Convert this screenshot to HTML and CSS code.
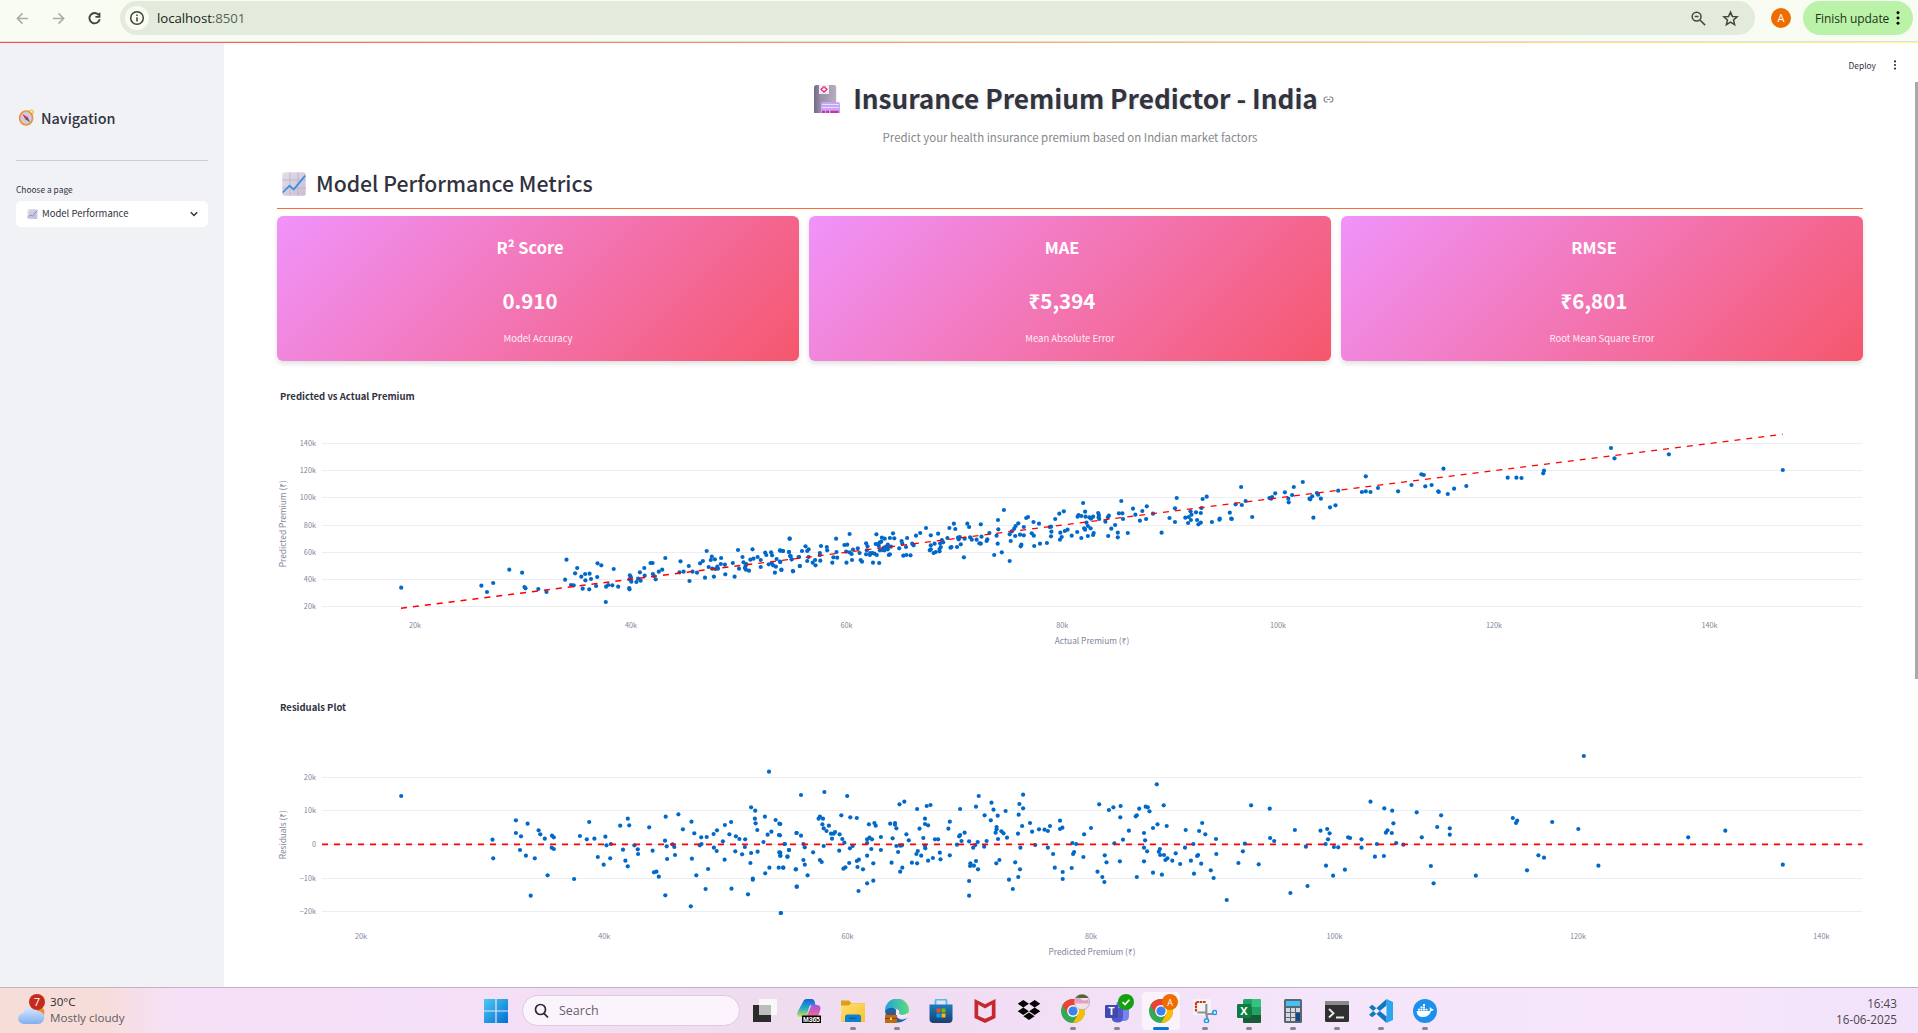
FILE: index.html
```html
<!DOCTYPE html>
<html lang="en">
<head>
<meta charset="utf-8">
<title>Insurance Premium Predictor - India</title>
<link rel="stylesheet" href="styles.css">
</head>
<body>
<svg class="defs" width="0" height="0" aria-hidden="true">
  <defs>
    <linearGradient id="paper" x1="0" y1="0" x2="1" y2="1"><stop offset="0" stop-color="#e6deeb"/><stop offset="1" stop-color="#c9bdd3"/></linearGradient>
    <linearGradient id="steel" x1="0" y1="0" x2="1" y2="0"><stop offset="0" stop-color="#74688a"/><stop offset=".3" stop-color="#998fa6"/><stop offset="1" stop-color="#b8aebf"/></linearGradient>
    <linearGradient id="win" x1="0" y1="0" x2="1" y2="1"><stop offset="0" stop-color="#4cc8f6"/><stop offset="1" stop-color="#0070cf"/></linearGradient>
    <linearGradient id="folder" x1="0" y1="0" x2="1" y2="1"><stop offset="0" stop-color="#ffdf72"/><stop offset="1" stop-color="#fcc02a"/></linearGradient>
    <linearGradient id="edge" x1="0" y1="0" x2="1" y2="0"><stop offset="0" stop-color="#27a0dc"/><stop offset="1" stop-color="#5bdc7c"/></linearGradient>
    <linearGradient id="store" x1="0" y1="0" x2="0" y2="1"><stop offset="0" stop-color="#1c7cc0"/><stop offset="1" stop-color="#1b3f6e"/></linearGradient>
    <linearGradient id="cloud" x1="0" y1="0" x2="0" y2="1"><stop offset="0" stop-color="#dbe8ff"/><stop offset="1" stop-color="#7fb0f0"/></linearGradient>
    <linearGradient id="cpA" x1="0" y1="0" x2="0" y2="1"><stop offset="0" stop-color="#1b62d8"/><stop offset=".5" stop-color="#1fa9c8"/><stop offset="1" stop-color="#d8e04a"/></linearGradient>
    <linearGradient id="cpB" x1="0" y1="0" x2="0" y2="1"><stop offset="0" stop-color="#a950e8"/><stop offset="1" stop-color="#f3708c"/></linearGradient>
    <symbol id="chart-up" viewBox="0 0 24 24">
      <rect x=".3" y=".3" width="23.4" height="23.4" rx="2" fill="url(#paper)"/>
      <path d="M8 0v24M16 0v24M0 8h24M0 16h24" stroke="#bdb1c6" stroke-width=".8"/>
      <path d="M.8 20.5 7.5 13.6l4.2 4L23.2 3.6" fill="none" stroke="#2f8fe0" stroke-width="1.7"/>
    </symbol>
    <symbol id="chrome" viewBox="0 0 24 24">
      <circle cx="12" cy="12" r="12" fill="#34a853"/>
      <path d="M12 12 1.6 6A12 12 0 0 1 22.4 6z" fill="#ea4335"/>
      <path d="M12 6h10.4A12 12 0 0 1 12 24l5.2-9z" fill="#fbbc05"/>
      <path d="M1.6 6 6.8 15 12 12 12 6z" fill="#ea4335"/>
      <circle cx="12" cy="12" r="5.9" fill="#fff"/><circle cx="12" cy="12" r="4.6" fill="#3b82f0"/>
    </symbol>
  </defs>
</svg>

<header class="toolbar">
  <svg class="tb-icon back" viewBox="0 0 16 16"><path d="M14 8H2.5M8 2.5 2.5 8 8 13.5" /></svg>
  <svg class="tb-icon forward" viewBox="0 0 16 16"><path d="M2 8h11.5M8 2.5 13.500 8 8 13.500" /></svg>
  <svg class="tb-icon reload" viewBox="0 0 16 16"><path d="M12.600 4.500A5.500 5.500 0 1 0 13.500 8.600"/><path d="M13.300 1.800v4.400H9"/></svg>
  <div class="omnibox">
    <span class="site-info"><svg viewBox="0 0 16 16"><circle cx="8" cy="8" r="6.300"/><path d="M8 7.200v4.200M8 4.400v1.500"/></svg></span>
    <span class="url">localhost<span class="port">:8501</span></span>
    <svg class="omni-icon" viewBox="0 0 18 18"><circle cx="7" cy="7" r="4.700"/><path d="M10.500 10.500 16 16M5 7h4"/></svg>
    <svg class="omni-icon star" viewBox="0 0 18 18"><path d="m9 2.200 2 4.600 5 .45-3.800 3.300 1.150 4.900L9 12.850l-4.350 2.600 1.150-4.900L2 7.250l5-.45z"/></svg>
  </div>
  <span class="avatar">A</span>
  <div class="update"><span>Finish update</span><svg viewBox="0 0 4 16"><circle cx="2" cy="2" r="1.700"/><circle cx="2" cy="8" r="1.700"/><circle cx="2" cy="14" r="1.700"/></svg></div>
</header>

<div class="app">
  <aside class="sidebar">
    <h2 class="nav-title">
      <svg viewBox="0 0 16 17"><circle cx="12.800" cy="3" r="2" fill="none" stroke="#f2b53c" stroke-width="1.200"/><ellipse cx="7.600" cy="9" rx="6.500" ry="7" fill="#d5c9dc" stroke="#e5963b" stroke-width="1.700"/><path d="m3.900 5 5 2.900L6.500 10z" fill="#e02c55"/><path d="m11.500 13.200-5-3.100 2.400-2.300z" fill="#5a5068"/></svg>
      <span>Navigation</span>
    </h2>
    <hr>
    <label class="select-label">Choose a page</label>
    <div class="select"><svg class="opt-icon"><use href="#chart-up"/></svg><span>Model Performance</span><svg class="chev" viewBox="0 0 10 8"><path d="M1.800 2.300 5 5.500 8.200 2.300"/></svg></div>
  </aside>

  <main class="main">
    <div class="deploy"><span>Deploy</span><svg viewBox="0 0 4 10"><circle cx="2" cy="1.400" r="1.100"/><circle cx="2" cy="5" r="1.100"/><circle cx="2" cy="8.600" r="1.100"/></svg></div>
    <h1 class="title">
      <svg class="hospital" viewBox="0 0 26 28"><path d="M0 2.500Q0 0 2.500 0H20q2.200 0 2.200 2.200V28H0z" fill="url(#steel)"/><rect x="5" y="0" width="10" height="9" fill="#f2eaf8"/><path d="M10 .7 13.800 4.300 10 8 6.200 4.300z" fill="#e3265c"/><path d="M10 2.600v3.400M8.300 4.300h3.400" stroke="#fff" stroke-width="1.300"/><path d="M7 19q0-2 2-2h15q2 0 2 2v9H7z" fill="#c5a8f2"/><path d="M8 19.500h17M8 22.500h17" stroke="#e9dcff" stroke-width="1"/><path d="M8 26.800h3m1 0h3m1.500 0h8" stroke="#d42aa8" stroke-width="2.200"/></svg>
      <span>Insurance Premium Predictor - India</span>
      <svg class="link" viewBox="0 0 12 8"><path d="M5 1.200H3.700a2.800 2.800 0 0 0 0 5.600H5M7 1.200h1.300a2.800 2.800 0 0 1 0 5.600H7M4 4h4"/></svg>
    </h1>
    <p class="subtitle"><span>Predict your health insurance premium based on Indian market factors</span></p>
    <h2 class="section"><svg><use href="#chart-up"/></svg><span>Model Performance Metrics</span></h2>

    <section class="cards">
      <article class="card"><h3>R² Score</h3><strong>0.910</strong><p>Model Accuracy</p></article>
      <article class="card"><h3>MAE</h3><strong>₹5,394</strong><p>Mean Absolute Error</p></article>
      <article class="card"><h3>RMSE</h3><strong>₹6,801</strong><p>Root Mean Square Error</p></article>
    </section>

    <figure class="chart">
      <figcaption>Predicted vs Actual Premium</figcaption>
      <svg id="predicted" viewBox="277 406 1586 255" width="1586" height="255"></svg>
    </figure>
    <figure class="chart second">
      <figcaption>Residuals Plot</figcaption>
      <svg id="residuals" viewBox="277 717 1586 250" width="1586" height="250"></svg>
    </figure>
  </main>
  <div class="scrollbar"></div>
</div>

<footer class="taskbar">
  <div class="weather">
    <svg viewBox="0 0 30 34"><circle cx="22" cy="18" r="4.500" fill="#f28a2a"/><path d="M6 30a5.500 5.500 0 0 1-.6-11A7.500 7.500 0 0 1 19.500 17a6.500 6.500 0 0 1 .5 13z" fill="url(#cloud)"/><circle cx="19" cy="8" r="8" fill="#c42b1c"/><text x="19" y="12.300" text-anchor="middle">7</text></svg>
    <div><b>30°C</b><span>Mostly cloudy</span></div>
  </div>
  <div class="dock">
    <span class="app-icon start"><svg viewBox="0 0 24 24"><path d="M0 0h11.400v11.400H0zM12.600 0H24v11.400H12.600zM0 12.600h11.400V24H0zM12.600 12.600H24V24H12.600z" fill="url(#win)"/></svg></span>
    <div class="search"><svg viewBox="0 0 16 16"><circle cx="7.500" cy="6.500" r="5"/><path d="m11 10.300 4 4.200"/></svg><span>Search</span></div>
    <span class="app-icon"><svg viewBox="0 0 24 24"><path d="M0 6h18v17H0z" fill="#2b2b2b"/><path d="M6 0h18v16H6z" fill="#f8f8f8"/><path d="M6 6h12v10H6z" fill="#bdbdbd"/></svg></span>
    <span class="app-icon"><svg viewBox="0 0 24 24"><path d="M7 1q1-1 3-1h5q2 0 2.700 2.500L18.500 6h-3.700q-2 0-2.600 2L10 15.500Q9.400 18 7 18H3q-4-.5-2.500-5z" fill="url(#cpA)"/><path d="M14.500 6H20q4.500.5 3.200 5L21.600 16q-.8 2-3 2H11q-1.500 0-1-1.500z" fill="url(#cpB)"/><path d="M5 16.500h19V24H5z" fill="#000"/><text x="14.500" y="22.700" text-anchor="middle" textLength="17" class="m365">M365</text></svg></span>
    <span class="app-icon run"><svg viewBox="0 0 24 24"><path d="M0 1.500h8l2.500 3H24V9H0z" fill="#dda013"/><path d="M0 6.500h7.500l2.500-2H24V23H0z" fill="url(#folder)"/><path d="M4 23v-5q0-2.500 2.500-2.500h11Q20 15.500 20 18v5z" fill="#0f7fd0"/><path d="M8 19.300h8" stroke="#075aa0" stroke-width="1.200"/></svg></span>
    <span class="app-icon run"><svg viewBox="0 0 24 24"><path d="M0 12A12 12 0 0 1 24 11c0 4-3 5.500-6 5.500s-4-1-4-3c0-5-9-5-14-1.500" fill="url(#edge)"/><path d="M0 12c4-5 13-4 11 2-1 4 4 9 11 5-4 6-20 8-22-7" fill="#1764ad"/><path d="M11 12c2-3 4 0 3 2 0 2 4 3 9 0l-2 4c-6 2-11-1-10-6" fill="#f5e9f8"/><path d="M0 16h12v8H0z" fill="#bd6a14"/><path d="M3.500 16v-2h5v2M0 19.500h12" fill="none" stroke="#8a4308" stroke-width="1"/><path d="M5 18.500h2v2.500H5z" fill="#ffcf4d"/></svg></span>
    <span class="app-icon"><svg viewBox="0 0 24 24"><path d="M6.500 7V2q0-1.500 1.500-1.500h8q1.500 0 1.500 1.500v5" fill="none" stroke="#45c2ee" stroke-width="1.800"/><path d="M.5 5.500h23V20q0 4-4 4h-15q-4 0-4-4z" fill="url(#store)"/><path d="M7.500 9.500h4v4h-4z" fill="#f25022"/><path d="M12.500 9.500h4v4h-4z" fill="#7fba00"/><path d="M7.500 14.500h4v4h-4z" fill="#00a4ef"/><path d="M12.500 14.500h4v4h-4z" fill="#ffb900"/></svg></span>
    <span class="app-icon"><svg viewBox="0 0 24 24"><path d="M1.500 0 12 5.200 22.500 0v19L12 24 1.500 19z" fill="#c5282f"/><path d="m5.200 5.600 6.800 4 6.800-4v11.200L12 19.800l-6.800-3z" fill="#f1dff3"/></svg></span>
    <span class="app-icon"><svg viewBox="0 0 24 24"><path d="m6.300 1 5.600 3.700-5.600 3.700L.7 4.700zm11.400 0 5.600 3.700-5.600 3.700-5.600-3.700zM6.300 8.600l5.600 3.700L6.300 16 .7 12.300zm11.400 0 5.600 3.700-5.600 3.700-5.600-3.700zM12 13.600l5.600 3.700-5.600 3.700-5.600-3.700z" fill="#050505"/></svg></span>
    <span class="app-icon run"><svg viewBox="0 0 24 24"><use href="#chrome"/></svg><svg class="badge" viewBox="0 0 16 16"><circle cx="8" cy="8" r="7.700" fill="#efe3ea" stroke="#999" stroke-width=".6"/><path d="M1.500 4Q3.500.4 8 .4T14.500 4z" fill="#50643c"/><path d="M1 5q3-3 6 0t7.500 0l.3 4.500H.8z" fill="#e79fc0"/></svg></span>
    <span class="app-icon run"><svg viewBox="0 0 24 24"><circle cx="15" cy="5.500" r="3.500" fill="#5f6fd6"/><path d="M9 9h15v8q0 5-5 5h-5q-5 0-5-5z" fill="#7b83eb"/><path d="M8 9h10v9q0 6-6 5.500T7 18z" fill="#5059c9"/><rect x="0" y="6" width="13" height="13" rx="1.200" fill="#4149b0"/><text x="6.500" y="16" text-anchor="middle" class="glyph">T</text></svg><svg class="badge" viewBox="0 0 16 16"><circle cx="8" cy="8" r="8" fill="#13a10e"/><path d="m4.600 8.200 2.400 2.400 4.400-4.800" fill="none" stroke="#fff" stroke-width="1.700"/></svg></span>
    <span class="app-icon run active"><svg viewBox="0 0 24 24"><use href="#chrome"/></svg><svg class="badge" viewBox="0 0 16 16"><circle cx="8" cy="8" r="8" fill="#ef6c00"/><text x="8" y="11.500" text-anchor="middle" class="badge-a">A</text></svg></span>
    <span class="app-icon run"><svg viewBox="0 0 24 24"><rect x="0" y="0" width="18" height="16" rx="1.500" fill="#f4f3f5"/><path d="M3 12.500V3h10" fill="none" stroke="#d03a12" stroke-width="2.200" stroke-dasharray="2.600 .7"/><path d="M13.300 5v10h8M4.500 13.500h8.800l1 6.500" fill="none" stroke="#8b939c" stroke-width="2.200"/><g fill="#fff" stroke="#1a9ce8" stroke-width="1.600"><circle cx="21.700" cy="13.500" r="2"/><circle cx="13.500" cy="21.800" r="2"/></g></svg></span>
    <span class="app-icon run"><svg viewBox="0 0 24 24"><rect x="6" y="0" width="18" height="24" rx="1.500" fill="#21a366"/><path d="M15 0h7.500Q24 0 24 1.500V8h-9z" fill="#33c481"/><path d="M6 8h9v8H6z" fill="#107c41"/><path d="M6 16h18v6.500q0 1.500-1.500 1.500h-15Q6 24 6 22.500z" fill="#185c37"/><rect x="0" y="5" width="14" height="14" rx="1.200" fill="#107c41"/><text x="7" y="16" text-anchor="middle" class="glyph">X</text></svg></span>
    <span class="app-icon run"><svg viewBox="0 0 24 24"><rect x="3" y="0" width="18" height="24" rx="1.500" fill="#5c6670"/><path d="M5 2h14v5H5z" fill="#43c3ef"/><path d="M5 9h4v4H5zM10 9h4v4h-4zM15 9h4v4h-4zM5 14h4v4H5zM10 14h4v4h-4zM5 19h4v3H5zM10 19h4v3h-4z" fill="#d2d8de"/><path d="M15 14h4v8h-4z" fill="#114a8b"/></svg></span>
    <span class="app-icon run"><svg viewBox="0 0 24 24"><rect x="0" y="2" width="24" height="21" rx="1.500" fill="#303030"/><path d="M0 6V3.500Q0 2 1.500 2h21Q24 2 24 3.500V6z" fill="#8a8a8a"/><path d="m4 10 4.500 4.300L4 18.500M11 18.500h8" fill="none" stroke="#e8e8e8" stroke-width="1.900"/></svg></span>
    <span class="app-icon run"><svg viewBox="0 0 24 24"><path d="m17.500 0 6.500 3v18l-6.500 3z" fill="#2aa7ee"/><path d="M17.500 0v6.500L3.200 18.200 0 15.700zM17.500 24v-6.500L3.200 5.800 0 8.300z" fill="#0f79c0"/></svg></span>
    <span class="app-icon run"><svg viewBox="0 0 24 24"><circle cx="12" cy="12" r="12" fill="#1d90ed"/><path d="M3.500 12h13q1-2 0-3.300 1.500-.7 2.200 1.300 1.400-.2 2 .5-.8 1.700-2.700 1.700Q16 18 9.800 18 4 18 3.500 12M5 9.700h2v1.800H5zM7.500 9.700h2v1.800h-2zM10 9.700h2v1.800h-2zM12.500 9.700h2v1.800h-2zM7.500 7.400h2v1.800h-2zM10 7.400h2v1.800h-2zM10 5.100h2v1.800h-2z" fill="#fff"/></svg></span>
  </div>
  <div class="clock"><span>16:43</span><span>16-06-2025</span></div>
</footer>
<script src="charts.js"></script>
</body>
</html>
```
FILE: styles.css
```css
* { box-sizing: border-box; }
body {
  margin: 0; width: 1918px; height: 1033px; overflow: hidden;
  display: flex; flex-direction: column; background: #fff; color: #31333f;
  font-family: "Noto Sans CJK SC", "Noto Sans", sans-serif;
}
h1, h2, h3, p, figure { margin: 0; }
svg { display: block; flex: none; }
.defs { position: absolute; }
span, figcaption, strong { white-space: nowrap; }

/* browser toolbar */
.toolbar {
  flex: none; height: 42px; padding: 1px 5px 6px 15px; display: flex; align-items: center;
  background: #f8fcf3; border-bottom: 1px solid #dde1d9;
  font-family: "Open Sans", sans-serif;
}
.tb-icon { width: 15px; height: 15px; fill: none; stroke: #a9ada5; stroke-width: 1.7; }
.forward { margin-left: 21px; }
.reload { margin-left: 21px; stroke: #3c4a38; stroke-width: 2; }
.omnibox {
  flex: none; margin-left: 18px; width: 1635px; height: 34px; padding: 0 16px 0 5px; border-radius: 17px;
  background: #e3ecdc; display: flex; align-items: center;
}
.site-info { width: 24px; height: 24px; border-radius: 50%; background: #f8fcf3; display: grid; place-items: center; }
.site-info svg { width: 16px; height: 16px; fill: none; stroke: #3a4237; stroke-width: 1.5; }
.url { margin-left: 8px; flex: 1; font-size: 13.300px; letter-spacing: -.1px; color: #1b1f1a; }
.port { color: #5a6157; }
.omni-icon { width: 17px; height: 17px; margin-left: 15px; fill: none; stroke: #41493e; stroke-width: 1.600; }
.avatar {
  margin-left: 16px; width: 20px; height: 20px; border-radius: 50%; background: #ef6c00; color: #fff;
  font-size: 11px; line-height: 20px; text-align: center;
}
.update {
  margin-left: 12px; width: 110px; height: 34px; padding: 0 13px 0 12px; border-radius: 17px; background: #baf2a8;
  display: flex; align-items: center; justify-content: space-between; color: #1c3414; font-size: 12px; letter-spacing: -.1px;
}
.update svg { width: 4px; height: 14px; }

/* app shell */
.app { flex: 1; min-height: 0; display: flex; position: relative; }
.app::before {
  content: ""; position: absolute; inset: 0 0 auto; height: 1px;
  background: linear-gradient(90deg, #ff4b4b, #fffd80);
}
.sidebar { flex: none; width: 224px; padding: 63px 16px 0; background: #f0f2f6; }
.nav-title { display: flex; align-items: center; height: 25px; padding-left: 2px; font-size: 14.400px; line-height: 25px; font-weight: 500; }
.nav-title svg { width: 17px; height: 17px; margin-right: 6px; }
.sidebar hr { margin: 30px 0 0; border: 0; height: 1px; background: #cbcdd2; }
.select-label { display: block; margin-top: 21px; font-size: 8.400px; line-height: 14px; }
.select {
  margin-top: 5px; height: 26px; padding: 0 9px 0 11px; border-radius: 5px; background: #fff;
  display: flex; align-items: center; font-size: 9.500px; line-height: 24px;
}
.opt-icon { width: 11px; height: 10px; margin-right: 4px; }
.select span { height: 26px; }
.chev { width: 10px; height: 8px; margin-left: auto; fill: none; stroke: #31333f; stroke-width: 1.500; }

.main { flex: 1; min-width: 0; padding: 0 55px 0 53px; display: flex; flex-direction: column; }
.deploy { align-self: flex-end; display: flex; align-items: center; gap: 17px; height: 22px; margin: 12px -34px 0 0; font-size: 8.400px; line-height: 22px; }
.deploy svg { width: 4px; height: 10px; fill: #31333f; }
.title { display: flex; align-items: center; justify-content: center; height: 44px; padding-left: 8px; font-size: 26.200px; line-height: 44px; font-weight: 700; text-shadow: 1px 1px 3px rgba(0,0,0,.12); }
.hospital { width: 26px; height: 28px; margin: 2px 13px 0 0; }
.link { width: 11px; height: 7px; margin: 3px 0 0 5px; fill: none; stroke: #85868c; stroke-width: 1.300; }
.subtitle { margin-top: 7px; height: 20px; line-height: 20px; font-size: 11.450px; color: #85878c; text-align: center; }
.section { display: flex; align-items: center; margin-top: 20px; height: 42px; padding: 0 0 9px 5px; border-bottom: 1px solid #ff6b35; font-size: 21.250px; line-height: 30px; font-weight: 500; }
.section svg { width: 24px; height: 24px; margin: 2px 10px 0 0; }
.cards { display: grid; grid-template-columns: repeat(3, 1fr); gap: 10px; margin-top: 7px; }
.card { height: 145px; padding-top: 19px; border-radius: 6px; text-align: center; color: #fff; background: linear-gradient(135deg, #f093fb, #f5576c); box-shadow: 0 3px 5px rgba(0,0,0,.12); }
.card h3 { padding-right: 16px; height: 24px; font-size: 16.400px; line-height: 24px; }
.card strong { display: block; padding-right: 16px; margin-top: 26px; height: 30px; font-size: 20.500px; line-height: 30px; }
.card p { margin-top: 13px; font-size: 9.500px; line-height: 20px; opacity: .88; }
.chart { margin-top: 26px; }
.chart.second { margin-top: 37px; }
.chart figcaption { padding-left: 3px; height: 19px; line-height: 18px; font-size: 9.500px; font-weight: 700; }
.grid { stroke: #eceef3; stroke-width: 1; }
.tick { font-size: 7.300px; fill: #83879a; }
.axis-title { font-size: 8.400px; fill: #83879a; }
.dots circle { fill: #0068c9; }
.ref-line { stroke: #f00; stroke-width: 1.400; stroke-dasharray: 6 6; }
#residuals .ref-line { stroke-width: 1.700; }
.scrollbar { flex: none; align-self: flex-start; margin-top: 40px; width: 3px; height: 597px; background: #a9a9ac; margin-left: -3px; }

/* taskbar */
.taskbar {
  flex: none; height: 46px; border-top: 1px solid #bfb2c6; display: flex; align-items: center; position: relative;
  font-family: "Open Sans", sans-serif; padding: 0 21px 0 18px;
  background: linear-gradient(90deg, #f6ddd8 0, #f6ddd9 100px, #f6e0f6 170px, #f5e0f9 400px, #f0dcef 770px, #f1def4 1000px, #f5e5fa 1300px, #f6e5fb 1700px, #f2e3fa 1918px);
}
.weather { display: flex; width: 466px; }
.weather svg { width: 30px; height: 34px; margin-right: 2px; }
.weather text { fill: #fff; font-size: 11px; }
.weather b, .weather span { display: block; font-size: 11.650px; line-height: 16px; font-weight: 400; color: #2e2a30; }
.weather span { color: #615a64; }
.dock { display: flex; align-items: center; height: 45px; }
.app-icon { position: relative; width: 44px; height: 45px; padding: 11px 10px; }
.app-icon > svg:first-child { width: 24px; height: 24px; }
.app-icon.start { width: 34px; padding: 11px 0; }
.app-icon.run::after { content: ""; position: absolute; left: 19px; bottom: 3px; width: 6px; height: 3px; border-radius: 2px; background: #8a828e; }
.app-icon.active::before { content: ""; position: absolute; left: 3px; top: 4px; width: 38px; height: 38px; border-radius: 4px; background: #fbf3fc; }
.app-icon.active > svg { position: relative; }
.app-icon.active::after { left: 14px; width: 16px; background: #0078d4; }
.app-icon .badge, .app-icon.active .badge { position: absolute; left: 23px; top: 6px; width: 16px; height: 16px; }
.m365 { font: 700 7px "Liberation Sans", sans-serif; fill: #fff; }
.glyph { font: 700 11px "Open Sans", sans-serif; fill: #fff; }
.badge-a { font: 9px "Open Sans", sans-serif; fill: #fff; }
.search {
  width: 218px; height: 31px; margin: 0 3px 0 4px; padding-left: 10px; border-radius: 16px; display: flex; align-items: center; gap: 10px;
  background: #fbf4fc; border: 1px solid #dccbe0; font-size: 12.500px; color: #66606a;
}
.search svg { width: 16px; height: 16px; fill: none; stroke: #2d2a30; stroke-width: 1.700; }
.clock { margin-left: auto; text-align: right; }
.clock span { display: block; font-size: 11.700px; line-height: 16px; color: #4b454e; }
```
FILE: charts.js
```js
const NS = 'http://www.w3.org/2000/svg';

function add(parent, tag, attrs, text) {
  const el = document.createElementNS(NS, tag);
  for (const k in attrs) el.setAttribute(k, attrs[k]);
  if (text !== undefined) el.textContent = text;
  parent.appendChild(el);
  return el;
}

// Each block of points has its own origin and horizontal unit.
function drawChart(id, o) {
  const svg = document.getElementById(id);
  o.yTicks.forEach(([y, label]) => {
    add(svg, 'line', { class: 'grid', x1: 322, x2: 1862.5, y1: y, y2: y });
    add(svg, 'text', { class: 'tick', x: 316, y: y + 2.7, 'text-anchor': 'end' }, label);
  });
  o.xTicks.forEach(([x, label]) =>
    add(svg, 'text', { class: 'tick', x, y: o.tickY, 'text-anchor': 'middle' }, label));
  add(svg, 'text', { class: 'axis-title', x: 1092, y: o.titleY, 'text-anchor': 'middle', textLength: o.xLen }, o.xTitle);
  add(svg, 'text', { class: 'axis-title', 'text-anchor': 'middle', textLength: o.yLen, transform: `translate(286 ${o.yMid}) rotate(-90)` }, o.yTitle);
  const g = add(svg, 'g', { class: 'dots' });
  o.blocks.forEach(b => b.pts.trim().split(/\s+/).forEach(p => {
    const [x, y] = p.split(',').map(Number);
    add(g, 'circle', { cx: (b.x + x * b.unit).toFixed(1), cy: (o.top + y / 3).toFixed(1), r: 2.1 });
  }));
  const [x1, y1, x2, y2] = o.line;
  add(svg, 'line', { class: 'ref-line', x1, y1, x2, y2 });
}

drawChart('predicted', {
  top: 420, tickY: 628, titleY: 643.5, xTitle: 'Actual Premium (₹)', xLen: 74.5,
  yTitle: 'Predicted Premium (₹)', yLen: 87, yMid: 523.7,
  yTicks: [[443.5, '140k'], [470.5, '120k'], [497.5, '100k'], [525.5, '80k'], [552.5, '60k'], [579.5, '40k'], [606.5, '20k']],
  xTicks: [[415, '20k'], [631, '40k'], [846.5, '60k'], [1062.3, '80k'], [1278, '100k'], [1494, '120k'], [1709.5, '140k']],
  line: [401, 608.3, 1782.7, 434.3],
  blocks: [
    { x: 260, unit: 0.34439, pts: `410,503 643,497 659,516 677,489 724,449 761,458 768,501 771,505 808,507 832,516
      890,419 921,444 915,460 886,479 903,495 911,496 933,470 944,462 957,461 945,481 961,477 937,506 956,508 976,498 979,471
      980,430 991,436 1027,447 1005,500 1011,495 1023,496 1040,500 1004,546 1074,466 1077,472 1073,478 1078,485 1072,504 1073,508
      1103,457 1116,444 1117,467 1098,476 1105,482 1093,486 1134,429 1140,429 1141,462 1144,468 1149,478 1158,455 1168,449 1177,414
      1221,424 1218,457 1230,455 1245,438 1247,483 1256,455 1269,458 1278,430 1286,423 1297,393 1292,473 1303,441 1309,420 1312,410
      1321,418 1313,446 1322,447 1330,446 1328,440 1338,432 1339,414 1350,434 1351,463 1318,470 1373,429 1378,470 1388,390 1391,446
      1401,411 1404,427 1412,432 1408,444 1411,449 1420,452 1410,438 1424,419 1430,388 1433,416 1445,411 1454,420 1454,441
      1467,398 1470,405 1484,397 1487,406 1477,433 1486,430 1490,436 1498,440 1500,417 1510,425 1510,391 1518,393 1514,449 1495,458
      1538,356 1536,396 1541,408 1544,418 1547,453 1565,411 1567,438` },
    { x: 780, unit: 0.34439, pts: `1,392 9,393 26,396 28,356 29,408 34,418 1,426 4,450 38,454 54,411 58,438 64,393 74,379 83,388 79,393
      83,411 79,423 95,428 102,420 103,436 119,378 116,399 116,405 117,422 136,381 137,391 163,356 164,396 155,412 166,413 152,428
      187,375 195,374 202,342 192,395 193,428 202,397 208,402 212,389 209,420 226,385 231,399 234,420 238,425
      250,370 254,379 252,391 250,403 261,405 262,399 268,399 274,401 281,405 270,428 288,429 280,343 278,372 284,373 289,368 294,365
      296,353 304,356 319,354 332,355 328,340 287,378 290,391 297,390 302,383 307,388 308,380 313,374 313,388 316,405 319,403 322,380
      312,382 303,391 346,385 353,363 355,371 366,381 369,354 358,407 367,405 379,406 384,371 388,376 395,347 407,339 424,324
      438,346 459,341 438,376 449,371 438,388 435,391 446,399 452,396 463,394 467,381 463,387 465,370 470,360 474,367 486,354
      492,324 505,311 509,327 495,383 498,381 514,381 525,373 517,353 522,351 519,358 536,356 534,412 544,311 549,321
      552,352 557,359 571,359 583,313 585,350 579,370 583,371 600,363 602,358 608,339 622,405 632,371 629,347 634,328 633,300
      644,397 650,270 667,423 667,343 670,363 673,334 680,326 684,318 692,310 683,348 697,344 708,346 708,321 715,294 720,291
      701,374 699,379 731,340 737,347 736,306 752,311 738,378 755,371 775,369 783,321 787,320 788,335 787,349 799,297 811,281 824,274
      814,338 813,359 818,351 827,333 835,329 847,347 863,336 864,290 867,285 875,288 880,249 886,275 887,290 898,292 903,296 909,290
      890,308 894,318 883,325 886,329 902,325 911,339 909,345 894,348 875,354 924,279 926,285 925,292 927,297 945,305 952,292 955,287
      953,348 962,326 973,315 984,280 994,280 991,243 996,297 981,338 981,352 1010,339 1025,266 1032,284 1045,302 1052,273 1065,259
      1063,297 1083,281 1108,338 1131,294 1147,265 1147,306 1152,234 1177,293 1185,309 1187,291 1192,274 1195,284 1193,300 1208,277
      1211,300 1222,279 1224,264 1227,237 1239,230 1215,313 1222,308 1254,306 1276,299 1277,296 1306,278 1310,296 1312,297 1323,253
      1341,255 1352,243 1339,201 1371,291 1421,234 1426,236 1429,231 1438,220 1466,217 1476,236 1477,247 1487,225 1492,201` },
    { x: 1300, unit: 0.39413, pts: `7,186 24,236 26,238 31,229 43,219 46,224 53,236 34,293 76,262 90,256 97,212 157,216 167,169 167,214
      179,216 198,204 249,214 283,195 308,163 314,165 318,199 334,195 351,214 352,216 364,146 375,222 391,206 422,198 527,173 549,173
      562,174 617,160 619,152 789,84 798,115 936,103 1225,150` }
  ]
});

drawChart('residuals', {
  top: 690, tickY: 939, titleY: 955, xTitle: 'Predicted Premium (₹)', xLen: 87,
  yTitle: 'Residuals (₹)', yLen: 49, yMid: 834.7,
  yTicks: [[777.5, '20k'], [810.5, '10k'], [844.5, '0'], [878.5, '−10k'], [911.5, '−20k']],
  xTicks: [[361, '20k'], [604.3, '40k'], [847.6, '60k'], [1091, '80k'], [1334.5, '100k'], [1578, '120k'], [1821.4, '140k']],
  line: [322, 844.4, 1862.5, 844.4],
  blocks: [
    { x: 260, unit: 0.34439, pts: `410,318 675,449 677,505 743,391 777,401 743,429 758,439 755,480 772,497 798,505 786,617 809,421 814,433
      827,446 848,437 853,442 847,473 853,477 835,556 912,567 929,438 949,448 956,396 971,446 981,501 998,524 1003,440 1006,466
      1019,462 1017,505 1046,407 1068,386 1072,406 1054,479 1061,512 1068,529 1087,466 1097,478 1098,492 1130,412 1140,482 1144,547
      1151,545 1158,560 1178,380 1215,373 1176,452 1181,469 1182,507 1198,463 1203,471 1205,495 1177,616 1228,418 1253,395 1261,430
      1254,506 1267,556 1251,649 1277,466 1282,462 1281,442 1297,441 1301,537 1294,597 1317,432 1327,421 1318,473 1326,483 1344,454
      1350,405 1368,396 1363,433 1349,509 1369,596 1382,439 1380,484 1392,447 1409,448 1408,471 1400,493 1426,352 1438,362 1437,386
      1439,400 1444,420 1426,489 1445,485 1424,519 1431,566 1431,569 1417,613 1466,380 1462,456 1474,434 1485,425 1478,245 1467,550
      1479,533 1497,390 1508,401 1507,435 1508,487 1511,497 1506,533 1519,533 1524,462 1536,480 1531,500 1512,669 1558,429 1556,538
      1558,590` },
    { x: 780, unit: 0.34439, pts: `1,402 0,436 13,462 26,480 1,488 1,497 22,500 10,533 3,669 46,538 49,590 48,429 61,437 61,315 68,462
      72,472 68,510 72,524 80,556 96,487 112,386 116,380 125,386 123,403 127,415 135,423 142,407 127,468 116,510 121,516 148,431
      156,431 160,426 151,446 129,306 178,376 173,433 181,447 187,458 172,482 195,318 204,382 223,384 203,475 211,468 184,536 190,532
      201,519 223,513 229,509 225,531 241,538 228,603 258,403 274,399 278,407 253,448 260,443 267,448 253,459 265,477 253,497 271,520
      293,441 293,480 253,580 271,572 320,401 334,399 334,404 338,415 327,445 338,468 349,467 354,466 343,486 324,518 355,533 349,545
      347,343 361,335 398,357 367,433 374,451 405,416 421,386 421,402 430,406 426,348 437,345 416,444 421,467 422,475 400,483
      396,492 410,497 383,518 398,520 430,512 444,504 450,448 459,448 464,488 466,508 489,416 493,395 493,496 523,357 514,464
      520,439 523,435 527,453 536,428 549,454 574,456 567,465 561,473 593,470 600,453 553,520 552,528 563,527 569,513 575,538 549,573
      549,617 577,318 569,350 594,376 614,338 620,359 632,377 612,391 629,411 629,418 626,428 643,424 649,430 633,447 659,443 655,363
      628,520 637,510 665,569 676,597 683,517 697,538 692,561 706,314 695,342 706,355 693,374 703,408 691,431 698,473 726,399 732,425
      752,418 768,419 778,423 784,408 741,465 778,473 793,492 798,533 813,392 813,417 820,413 849,459 860,462 854,486 851,492 881,501
      883,433 903,414 847,534 821,546 821,567 922,545 936,561 942,576 927,343 955,360 968,352 989,348 988,382 1013,422 996,449 971,460
      943,496 948,517 987,514 1043,356 1062,350 1068,352 1073,364 1033,379 1036,376 1096,403 1083,414 1123,408 1114,346 1094,283
      1057,429 1060,451 1057,473 1066,484 1103,477 1100,485 1104,495 1115,495 1125,505 1119,510 1139,512 1057,514 1083,548 1109,554
      1036,561 1149,490 1162,522 1176,473 1200,462 1178,420 1226,399 1217,423 1235,433 1266,447 1267,492 1211,498 1214,495 1193,512
      1223,521 1202,551 1251,541 1259,564 1297,630 1331,519 1344,484 1350,461 1368,346 1422,356 1423,444 1435,453 1390,523 1482,609
      1495,420` },
    { x: 1300, unit: 0.39413, pts: `15,470 19,588 52,422 69,417 75,430 71,448 65,462 86,471 97,472 66,527 84,557 114,539 122,442 127,444
      156,448 156,473 179,335 214,355 234,362 237,400 222,421 218,428 233,429 195,462 190,500 213,498 244,459 262,464 296,367
      309,442 332,528 339,580 358,376 348,411 380,415 380,434 446,557 540,384 551,392 548,399 576,541 605,496 619,503 640,396
      706,417 757,527 720,198 985,442 1079,422 1225,524` }
  ]
});
```
